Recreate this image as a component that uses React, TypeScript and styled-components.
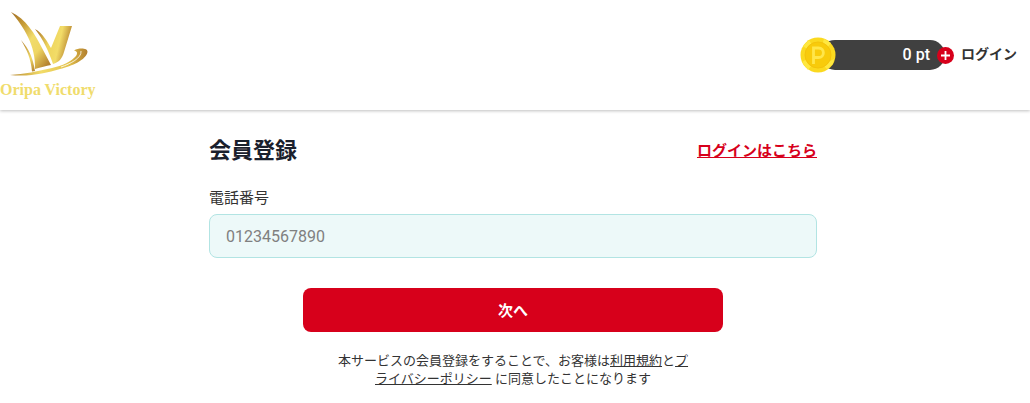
import React from "react";
import styled, { createGlobalStyle } from "styled-components";

const GlobalStyle = createGlobalStyle`
  *, *::before, *::after { box-sizing: border-box; }
  body {
    margin: 0;
    background: #fff;
    color: #333;
    font-family: Roboto, "Noto Sans CJK JP", sans-serif;
    font-size: 16px;
  }
`;

const Header = styled.header`
  display: flex;
  align-items: center;
  justify-content: space-between;
  height: 110px;
  padding-right: 13px;
  background: #fff;
  box-shadow: 0 1px 3px rgba(0, 0, 0, 0.25);
`;

const LogoLink = styled.a`
  display: block;
  height: 110px;
`;

const HeaderMenu = styled.nav`
  display: flex;
  align-items: center;
  gap: 7px;
`;

const PointBox = styled.div`
  display: flex;
  align-items: center;
`;

const Coin = styled.svg`
  position: relative;
  z-index: 1;
  margin-right: -16px;
`;

const PointValue = styled.span`
  width: 125px;
  height: 30px;
  padding-right: 15px;
  border-radius: 15px;
  background: #404040;
  color: #fff;
  font-weight: 500;
  line-height: 30px;
  text-align: right;
`;

const AddButton = styled.button`
  position: relative;
  display: flex;
  align-items: center;
  justify-content: center;
  width: 17px;
  height: 17px;
  margin-left: -8px;
  padding: 0;
  border: 0;
  border-radius: 50%;
  background: #d7001b;
  cursor: pointer;
`;

const LoginLink = styled.a`
  padding-bottom: 2px;
  color: #333;
  font-size: 14px;
  font-weight: 700;
  line-height: 20px;
  text-decoration: none;
`;

const Main = styled.main`
  width: 100%;
  max-width: 640px;
  margin: 0 auto;
  padding: 25px 18px 16px 14px;
`;

const TitleRow = styled.div`
  display: flex;
  align-items: center;
  justify-content: space-between;
`;

const Title = styled.h1`
  margin: 0;
  color: #1a202c;
  font-size: 22px;
  font-weight: 700;
  line-height: 32px;
`;

const SigninLink = styled.a`
  color: #d7001b;
  font-size: 15px;
  font-weight: 700;
  line-height: 24px;
`;

const Form = styled.form`
  display: flex;
  flex-direction: column;
  align-items: center;
  margin-top: 20px;
`;

const Label = styled.label`
  align-self: flex-start;
  font-size: 15px;
  line-height: 22px;
`;

const PhoneInput = styled.input`
  width: 100%;
  height: 44px;
  margin-top: 5px;
  padding: 0 16px;
  border: 1px solid #b2e4e3;
  border-radius: 8px;
  background: #edf9f9;
  color: #333;
  font: inherit;
  &::placeholder { color: #808080; opacity: 1; }
`;

const SubmitButton = styled.button`
  width: 100%;
  max-width: 420px;
  height: 44px;
  margin-top: 30px;
  padding: 0 0 2px;
  border: 0;
  border-radius: 8px;
  background: #d7001b;
  color: #fff;
  font-family: inherit;
  font-size: 15px;
  font-weight: 700;
  cursor: pointer;
`;

const Notice = styled.p`
  max-width: 360px;
  margin: 20px 0 0;
  font-size: 13px;
  line-height: 18px;
  text-align: center;
  word-break: break-all;
  a { color: inherit; }
`;

function Logo() {
  return (
    <svg width="98" height="110" viewBox="0 0 98 110" role="img" aria-label="Oripa Victory">
      <defs>
        <linearGradient id="wing" gradientUnits="userSpaceOnUse" x1="11" y1="18" x2="56" y2="54">
          <stop offset="0" stopColor="#a87628" />
          <stop offset="0.25" stopColor="#c99f38" />
          <stop offset="0.5" stopColor="#f1dc6c" />
          <stop offset="0.72" stopColor="#efd662" />
          <stop offset="1" stopColor="#b5832f" />
        </linearGradient>
        <linearGradient id="blade" gradientUnits="userSpaceOnUse" x1="21" y1="40" x2="35" y2="71">
          <stop offset="0" stopColor="#b07c2c" />
          <stop offset="0.6" stopColor="#f0da68" />
          <stop offset="1" stopColor="#b5832f" />
        </linearGradient>
        <linearGradient id="vee" gradientUnits="userSpaceOnUse" x1="35" y1="36" x2="70" y2="44">
          <stop offset="0" stopColor="#ad792c" />
          <stop offset="0.4" stopColor="#eed45c" />
          <stop offset="0.7" stopColor="#f2dc68" />
          <stop offset="1" stopColor="#b98731" />
        </linearGradient>
        <linearGradient id="swoosh" gradientUnits="userSpaceOnUse" x1="10" y1="0" x2="88" y2="0">
          <stop offset="0" stopColor="#b88a32" />
          <stop offset="0.4" stopColor="#f2dc69" />
          <stop offset="0.75" stopColor="#e3c24c" />
          <stop offset="1" stopColor="#b07c2c" />
        </linearGradient>
      </defs>
      <path d="M11 12C26 19 35 34 42 48L51 65C46 66 41 67 35 69C36 46 24 27 11 12Z" fill="url(#wing)" />
      <path d="M21 40C29 49 33 58 35 71L32 71.5C31 59 27 50 21 40Z" fill="url(#blade)" />
      <path d="M35 29C43 33 48 43 51 48L60 26H72L64 52C62 59 59 62 53 64C49 52 43 39 35 29Z" fill="url(#vee)" />
      <path d="M10 75C24 74.5 38 71 52 68C62 66 72 61 76 56C78 53 77 51 74 50.5C79 47.5 88 48 87.5 52C86 60 72 66 60 69C46 73 30 77 10 75Z" fill="url(#swoosh)" />
      <path d="M81 51C82 58 70 64 61 67" fill="none" stroke="#fff" strokeWidth="0.8" />
      <text x="0" y="95" fill="#f0dc6c" fontFamily="'Liberation Serif', serif" fontSize="16" fontWeight="700">
        Oripa Victory
      </text>
    </svg>
  );
}

function PointCoin() {
  return (
    <Coin width="36" height="36" viewBox="0 0 36 36" aria-hidden="true">
      <circle cx="18" cy="18" r="17.5" fill="#fbd91f" />
      <path d="M3 9L9 3L12 8L7 12ZM24 2L31 6L27 11L22 8ZM2 25L7 22L12 28L8 33ZM28 25L34 22L33 27L27 32L24 29Z" fill="#ffe840" />
      <circle cx="18" cy="18" r="13" fill="#f8cb0b" stroke="#f4c20b" />
      <path d="M13.5 27V11H18.5C25 11 25 20.5 18.5 20.5H13.5" fill="none" stroke="#ffe64a" strokeWidth="2.8" />
    </Coin>
  );
}

export default function App() {
  return (
    <>
      <GlobalStyle />
      <Header>
        <LogoLink href="#home"><Logo /></LogoLink>
        <HeaderMenu>
          <PointBox>
            <PointCoin />
            <PointValue>0 pt</PointValue>
            <AddButton type="button" aria-label="ポイントを追加">
              <svg width="9" height="9" viewBox="0 0 9 9" aria-hidden="true">
                <path d="M0 4.5H9M4.5 0V9" stroke="#fff" strokeWidth="1.8" />
              </svg>
            </AddButton>
          </PointBox>
          <LoginLink href="#login">ログイン</LoginLink>
        </HeaderMenu>
      </Header>
      <Main>
        <TitleRow>
          <Title>会員登録</Title>
          <SigninLink href="#login">ログインはこちら</SigninLink>
        </TitleRow>
        <Form onSubmit={(event: React.FormEvent) => event.preventDefault()}>
          <Label htmlFor="phone">電話番号</Label>
          <PhoneInput id="phone" type="tel" placeholder="01234567890" />
          <SubmitButton type="submit">次へ</SubmitButton>
          <Notice>
            本サービスの会員登録をすることで、お客様は<a href="#terms">利用規約</a>と<a href="#privacy">プライバシーポリシー</a> に同意したことになります
          </Notice>
        </Form>
      </Main>
    </>
  );
}
